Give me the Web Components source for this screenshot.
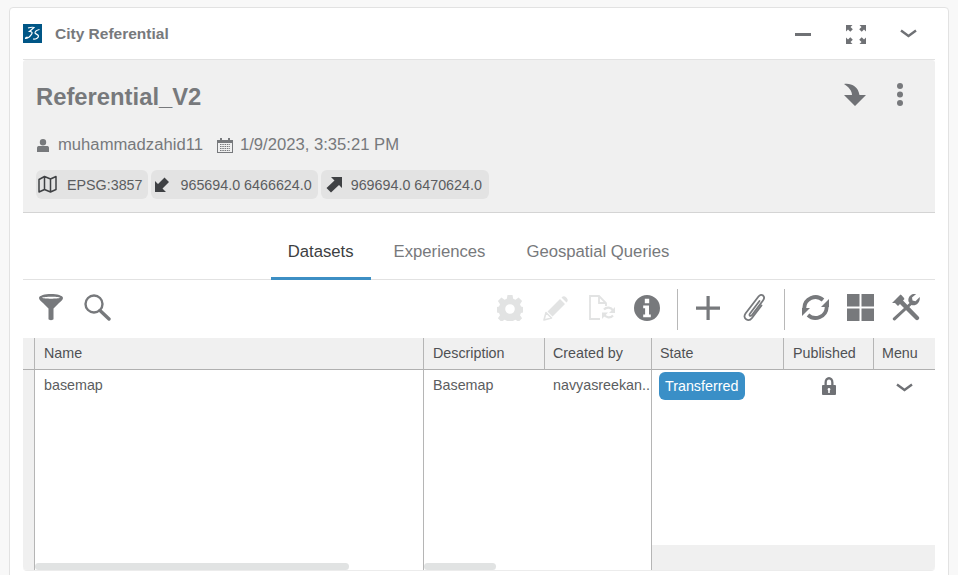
<!DOCTYPE html>
<html>
<head>
<meta charset="utf-8">
<style>
  html, body { margin: 0; height: 575px; overflow: hidden; background: #f8f8f8; }
  body { font-family: "Liberation Sans", Arial, sans-serif; color: #77797c; }
</style>
</head>
<body>
<city-widget>
  <widget-head slot="head" title-text="City Referential"></widget-head>
  <info-panel slot="panel" name="Referential_V2" user="muhammadzahid11" date="1/9/2023, 3:35:21 PM">
    <geo-chip icon="map" gap="10" pad="2" end="5">EPSG:3857</geo-chip>
    <geo-chip icon="sw" gap="12" pad="4" end="6">965694.0 6466624.0</geo-chip>
    <geo-chip icon="ne" gap="9" pad="5" end="7">969694.0 6470624.0</geo-chip>
  </info-panel>
  <tab-bar slot="tabs">
    <tab-item active>Datasets</tab-item>
    <tab-item>Experiences</tab-item>
    <tab-item>Geospatial Queries</tab-item>
  </tab-bar>
  <tool-bar slot="tools"></tool-bar>
  <data-grid slot="grid"></data-grid>
</city-widget>

<script>
const CORNER = "M0 0H6.500L4.500 2 6.800 4.300 4.300 6.800 2 4.500 0 6.500Z";

const ICONS = {
  minimize: '<rect x="0" y="0" width="16" height="3" fill="currentColor"/>',
  expand: `<g fill="currentColor"><path d="${CORNER}"/><path transform="matrix(-1 0 0 1 20 0)" d="${CORNER}"/><path transform="matrix(1 0 0 -1 0 19)" d="${CORNER}"/><path transform="matrix(-1 0 0 -1 20 19)" d="${CORNER}"/></g>`,
  chevron: '<path d="M1 1.500 8.500 7l7.500-5.500" fill="none" stroke="currentColor" stroke-width="2.400"/>',
  turn: '<path fill="currentColor" d="M0 1C7 0 14 3 15.500 12H22L11 23 0 12H8C8 8 5 4 0 1Z"/>',
  dots: '<g fill="currentColor"><circle cx="3" cy="3" r="3"/><circle cx="3" cy="11.500" r="3"/><circle cx="3" cy="20" r="3"/></g>',
  user: '<path fill="currentColor" d="M6 0a3.200 3.200 0 0 1 0 6.400A3.200 3.200 0 0 1 6 0ZM1.500 7h9C11.500 7 12 8 12 9v4H0V9c0-1 .5-2 1.500-2Z"/>',
  calendar: '<g fill="none" stroke="currentColor"><rect x=".5" y="2.500" width="15" height="12"/><path d="M3 6.500h10M3 8.500h10M3 10.500h10M3 12.500h10" stroke-dasharray="1.500 .8"/></g><path fill="currentColor" d="M0 2h16v3H0zM3 0h2v3H3zM11 0h2v3h-2z"/>',
  map: '<path fill="none" stroke="currentColor" stroke-width="1.500" stroke-linejoin="round" d="M1 4.500 6.500 1.500 12.500 4 18 1.500V14.500L12.500 17 6.500 14.500 1 17ZM6.500 1.500V14.500M12.500 4V17"/>',
  sw: '<path fill="currentColor" d="M0 15V4L3 7 9.500 .5 14 5 7.500 11.500 11 15Z"/>',
  ne: '<path fill="currentColor" d="M16 0V11L13 8 5 15.500 .5 11 8.500 3.500 5 0Z"/>',
  funnel: '<g fill="currentColor"><path fill-rule="evenodd" d="M0 4C0 1.500 6 0 12 0S24 1.500 24 4C24 6 22 7 20 9L14.500 14.500V25C14.500 26.500 9.500 26.500 9.500 25V14.500L4 9C2 7 0 6 0 4ZM3 3.800C5 5 19 5 21 3.800 19 2.500 5 2.500 3 3.800Z"/></g>',
  search: '<g fill="none" stroke="currentColor"><circle cx="10" cy="10" r="8.500" stroke-width="2.400"/><path d="M16 16.500 25 25" stroke-width="3.400" stroke-linecap="round"/></g>',
  gear: '<path fill="currentColor" fill-rule="evenodd" d="M10.500 0h5l.7 3.700 2.300 1 3.100-2.100 3.500 3.500-2.100 3.100 1 2.300 3.700.7v5l-3.700.7-1 2.300 2.100 3.100-3.500 3.500-3.100-2.100-2.300 1-.7 3.700h-5l-.7-3.700-2.300-1-3.100 2.100-3.500-3.500 2.100-3.100-1-2.300-3.700-.7v-5l3.700-.7 1-2.300-2.100-3.100 3.500-3.500 3.100 2.100 2.300-1ZM13 9.200a4.800 4.800 0 1 0 0 9.600 4.800 4.800 0 0 0 0-9.600Z"/>',
  pencil: '<path fill="none" stroke="currentColor" stroke-width="1.600" stroke-linejoin="round" d="M1 25 3 17.500 8.500 23Z"/><path fill="currentColor" d="M4.500 16.500 17 4 22 9 9.500 21.500ZM18.500 2.500C20 1 21.500 .8 23 2.300L23.700 3C25.200 4.500 25 6 23.500 7.500Z"/>',
  docsync: '<g fill="none" stroke="currentColor" stroke-width="1.800"><path d="M11 24H1V1H10L17 8V11M10 1V8H17"/></g><g fill="none" stroke="currentColor" stroke-width="2.200"><path d="M15 14.500A5.500 5.500 0 0 1 24 15.500"/><path d="M24 20.500A5.500 5.500 0 0 1 15 19.500"/></g><path fill="currentColor" d="M26 12V18H20ZM13 24V17.500H19Z"/>',
  info: '<path fill="currentColor" fill-rule="evenodd" d="M13 0a13 13 0 1 1 0 26 13 13 0 0 1 0-26ZM10.800 3.800v4.400h4.400V3.800ZM9.200 10.500v2.700h1.900v6.200H9.200v2.800h7.600v-2.800h-1.800v-8.900Z"/>',
  plus: '<path fill="currentColor" d="M10.500 0h3.200v10.500H24v3.200H13.700V24H10.500V13.700H0V10.500H10.500Z"/>',
  clip: '<path fill="none" stroke="currentColor" stroke-width="1.800" stroke-linecap="round" d="M17.500 8 8 20.500C6.500 22.500 8.500 24 10 22L21 7.500C24 3.500 19.500-.5 16.500 3.500L3.500 20.500C0 25.500 6.500 29.500 10 25L19.500 12.500"/>',
  refresh: '<g fill="none" stroke="currentColor" stroke-width="3.800"><path d="M2.300 14A11.200 11.200 0 0 1 21 6"/><path d="M24.700 13A11.200 11.200 0 0 1 6 21"/></g><path fill="currentColor" d="M27 5V13H19ZM0 22V14H8Z"/>',
  grid: '<path fill="currentColor" d="M0 0h12.500v12.500H0zM14.500 0H27v12.500H14.500zM0 14.500h12.500V27H0zM14.500 14.500H27V27H14.500z"/>',
  tools: '<g fill="currentColor"><path d="M0 9 8.500 .5C10 1.500 11.500 3 12.500 5L11 6.500 26.500 22.500C27.500 23.500 27.500 24.500 26.500 25.500 25.500 26.500 24.500 26.500 23.500 25.500L8 10 6 12 3 9Z"/><path d="M27.700 3 23.500 7.200 20.500 6.500 20 3.500 24.200 0C20-1 15.500 2.500 16.500 7.500L17.500 9 1 24C0 25.500 2 27.500 3.500 26L19.500 11C24 12.500 28.500 8.500 27.700 3Z"/></g>',
  lock: '<path fill="currentColor" fill-rule="evenodd" d="M1 8H2.500V5.500a4.500 5.500 0 0 1 9 0V8H13c.5 0 1 .5 1 1V17c0 .5-.5 1-1 1H1c-.5 0-1-.5-1-1V9c0-.5.5-1 1-1ZM4.800 8H9.200V5.500a2.200 3 0 0 0-4.400 0ZM7 11a1.300 1.300 0 0 0-.8 2.400V16h1.600V13.400A1.300 1.300 0 0 0 7 11Z"/>'
};

const VIEW = {
  minimize: [16, 3], expand: [20, 19], chevron: [17, 9], turn: [22, 23], dots: [6, 23],
  user: [12, 13], calendar: [16, 15], map: [19, 18.500], sw: [14, 15], ne: [16, 16],
  funnel: [24, 27], search: [27, 27], gear: [26, 26], pencil: [26, 26], docsync: [26, 26],
  info: [26, 26], plus: [24, 24], clip: [24, 29], refresh: [27, 27], grid: [27, 27],
  tools: [28, 27], lock: [14, 18]
};

class UiIcon extends HTMLElement {
  connectedCallback() {
    const name = this.getAttribute("name");
    const [w, h] = VIEW[name];
    this.attachShadow({ mode: "open" }).innerHTML = `
      <style>:host { display: inline-flex; flex: none; } svg { display: block; }</style>
      <svg width="${w}" height="${h}" viewBox="0 0 ${w} ${h}">${ICONS[name]}</svg>`;
  }
}

class CityWidget extends HTMLElement {
  constructor() {
    super();
    this.attachShadow({ mode: "open" }).innerHTML = `
      <style>
        :host {
          display: flex;
          flex-direction: column;
          box-sizing: border-box;
          margin: 7px 9px 0 9px;
          height: 580px;
          padding: 0 13px;
          background: #fff;
          border: 1px solid #e2e2e2;
          border-radius: 4px;
        }
      </style>
      <slot name="head"></slot>
      <slot name="panel"></slot>
      <slot name="tabs"></slot>
      <slot name="tools"></slot>
      <slot name="grid"></slot>`;
  }
}

class WidgetHead extends HTMLElement {
  connectedCallback() {
    this.attachShadow({ mode: "open" }).innerHTML = `
      <style>
        :host {
          display: flex;
          align-items: center;
          height: 51px;
          border-bottom: 1px solid #e2e2e2;
          color: #77797c;
        }
        .logo { width: 19px; height: 19px; margin-right: 13px; flex: none; display: block; }
        .title { font-size: 15.500px; font-weight: 700; flex: 1; }
        .acts { display: flex; align-items: center; color: #6f7175; padding-right: 18px; }
        .acts ui-icon:nth-child(1) { margin-right: 35px; margin-top: 2px; }
        .acts ui-icon:nth-child(2) { margin-right: 34px; margin-top: 2px; }
      </style>
      <svg class="logo" viewBox="0 0 19 19">
        <rect width="19" height="19" fill="#005686"/>
        <g fill="none" stroke="#fff" stroke-width="1.200">
          <path d="M5 4C7.500 3.200 9.500 3 11 3.500L6.500 7.500C9.500 7.500 9.800 9 8 11 6.800 12.800 4.800 14.500 2.500 14.500 2.500 13.500 3.500 13 4.500 13"/>
          <path d="M16.500 5.500C14 6 12 7.500 12 9 12.500 10 15 10.500 15.500 12 15.500 14 12.500 15.500 10 15"/>
        </g>
      </svg>
      <span class="title">${this.getAttribute("title-text")}</span>
      <div class="acts">
        <ui-icon name="minimize"></ui-icon>
        <ui-icon name="expand"></ui-icon>
        <ui-icon name="chevron"></ui-icon>
      </div>`;
  }
}

class InfoPanel extends HTMLElement {
  connectedCallback() {
    this.attachShadow({ mode: "open" }).innerHTML = `
      <style>
        :host {
          display: block;
          height: 153px;
          box-sizing: border-box;
          background: #f0f0f0;
          border-bottom: 1px solid #d4d4d4;
          border-radius: 3px 3px 0 0;
          padding: 23px 32px 0 13px;
        }
        .top { display: flex; align-items: center; height: 27px; }
        h1 { margin: 0; flex: 1; font-size: 23.800px; line-height: 27px; font-weight: 700; color: #77797c; }
        .top ui-icon { margin-top: -5px; }
        .top ui-icon:nth-of-type(1) { color: #6f7175; margin-right: 31px; }
        .top ui-icon:nth-of-type(2) { color: #77797c; }
        .meta { display: flex; align-items: center; margin-top: 25px; height: 20px; font-size: 16.650px; color: #77797c; }
        .meta .name { margin: 0 14px 0 9px; }
        .meta .when { margin-left: 7px; }
        .meta ui-icon:first-child { margin-left: 1px; }
        .chips { display: flex; gap: 3px; margin-top: 15px; }
      </style>
      <div class="top">
        <h1>${this.getAttribute("name")}</h1>
        <ui-icon name="turn"></ui-icon>
        <ui-icon name="dots"></ui-icon>
      </div>
      <div class="meta">
        <ui-icon name="user"></ui-icon><span class="name">${this.getAttribute("user")}</span>
        <ui-icon name="calendar"></ui-icon><span class="when">${this.getAttribute("date")}</span>
      </div>
      <div class="chips"><slot></slot></div>`;
  }
}

class GeoChip extends HTMLElement {
  connectedCallback() {
    const gap = this.getAttribute("gap");
    const pad = this.getAttribute("pad");
    const end = this.getAttribute("end");
    this.attachShadow({ mode: "open" }).innerHTML = `
      <style>
        :host {
          display: inline-flex;
          align-items: center;
          height: 29px;
          box-sizing: border-box;
          padding: 0 ${end}px 0 ${pad}px;
          background: #e3e3e3;
          border-radius: 6px;
          font-size: 14.300px;
          color: #5b5d60;
        }
        ui-icon { margin-right: ${gap}px; color: #3f4144; }
      </style>
      <ui-icon name="${this.getAttribute("icon")}"></ui-icon><slot></slot>`;
  }
}

class TabBar extends HTMLElement {
  constructor() {
    super();
    this.attachShadow({ mode: "open" }).innerHTML = `
      <style>
        :host {
          display: flex;
          justify-content: center;
          height: 67px;
          box-sizing: border-box;
          border-bottom: 1px solid #e2e2e2;
        }
      </style>
      <slot></slot>`;
  }
}

class TabItem extends HTMLElement {
  constructor() {
    super();
    this.attachShadow({ mode: "open" }).innerHTML = `
      <style>
        :host {
          display: flex;
          align-items: center;
          box-sizing: border-box;
          height: 67px;
          padding: 16px 18px 5px 23px;
          font-size: 16.700px;
          color: #77797c;
        }
        :host([active]) {
          padding: 16px 17px 2px 17px;
          color: #3d3f42;
          border-bottom: 3px solid #3d8fc4;
        }
      </style>
      <slot></slot>`;
  }
}

class ToolBar extends HTMLElement {
  connectedCallback() {
    this.attachShadow({ mode: "open" }).innerHTML = `
      <style>
        :host {
          display: flex;
          align-items: center;
          box-sizing: border-box;
          height: 58px;
          padding: 0 15px 3px 16px;
          color: #77797c;
          flex: none;
        }
        .left { display: flex; gap: 21px; align-items: center; flex: 1; }
        .group { display: flex; align-items: center; gap: 20px; }
        .off { color: #e2e3e3; }
        .sep { width: 1px; height: 41px; background: #b8b8b8; margin-top: 4px; }
      </style>
      <div class="left">
        <ui-icon name="funnel"></ui-icon>
        <ui-icon name="search"></ui-icon>
      </div>
      <div class="group">
        <ui-icon class="off" name="gear"></ui-icon>
        <ui-icon class="off" name="pencil"></ui-icon>
        <ui-icon class="off" name="docsync"></ui-icon>
      </div>
      <ui-icon name="info" style="margin-left:19px"></ui-icon>
      <div class="sep" style="margin-left:17px;margin-right:18px"></div>
      <ui-icon name="plus" style="margin-right:1px"></ui-icon>
      <ui-icon name="clip" style="margin:0 18px 0 21px"></ui-icon>
      <div class="sep" style="margin-right:17px"></div>
      <ui-icon name="refresh"></ui-icon>
      <ui-icon name="grid" style="margin:0 18px"></ui-icon>
      <ui-icon name="tools"></ui-icon>`;
  }
}

class DataGrid extends HTMLElement {
  connectedCallback() {
    this.attachShadow({ mode: "open" }).innerHTML = `
      <style>
        :host {
          display: grid;
          grid-template-columns: 12px 389px 121px 107px 132px 90px 1fr;
          grid-template-rows: 32px 200px;
          font-size: 14.300px;
          color: #5b5d60;
          border-bottom: 1px solid #ececec;
          border-radius: 0 0 4px 4px;
          align-self: stretch;
        }
        .gutter { background: #f0f0f0; border-right: 1px solid #b5b5b5; }
        .h {
          background: #f0f0f0;
          border-bottom: 1px solid #b0b0b0;
          border-right: 1px solid #b5b5b5;
          padding: 7px 0 0 9px;
          color: #4f5154;
          white-space: nowrap;
        }
        .h.last { border-right: 0; }
        .h.tight { padding-left: 8px; }
        .gutter.h { padding: 0; }
        .gutter.end { border-radius: 0 0 0 4px; }
        .c { padding: 7px 0 0 9px; white-space: nowrap; display: flex; flex-direction: column; min-width: 0; }
        .c.line { border-right: 1px solid #b5b5b5; }
        .clip { overflow: hidden; margin-left: -1px; }
        .thumb { margin-top: auto; margin-left: -9px; height: 7px; background: #e1e3e3; border-radius: 4px; }
        .right {
          grid-column: 5 / 8;
          display: grid;
          grid-template-columns: 132px 90px 1fr;
          grid-template-rows: 1fr 25px;
        }
        .cell { padding-top: 2px; }
        .foot { grid-column: 1 / 4; background: #f0f0f0; border-radius: 0 0 4px 0; }
        .badge {
          display: inline-block;
          margin-left: 7px;
          background: #3a8fc7;
          color: #fff;
          line-height: 28px;
          height: 28px;
          padding: 0 7px 0 6px;
          border-radius: 6px;
        }
        .mid { display: flex; justify-content: center; padding-top: 7px; color: #6f7175; }
      </style>
      <div class="gutter h"></div>
      <div class="h">Name</div>
      <div class="h">Description</div>
      <div class="h tight">Created by</div>
      <div class="h tight">State</div>
      <div class="h">Published</div>
      <div class="h last tight">Menu</div>
      <div class="gutter end"></div>
      <div class="c line"><span>basemap</span><div class="thumb" style="width:314px"></div></div>
      <div class="c"><span>Basemap</span><div class="thumb" style="width:72px"></div></div>
      <div class="c line"><span class="clip">navyasreekan..</span></div>
      <div class="right">
        <div class="cell"><span class="badge">Transferred</span></div>
        <div class="cell mid"><ui-icon name="lock"></ui-icon></div>
        <div class="cell mid" style="padding-top:13px"><ui-icon name="chevron"></ui-icon></div>
        <div class="foot"></div>
      </div>`;
  }
}

customElements.define("ui-icon", UiIcon);
customElements.define("city-widget", CityWidget);
customElements.define("widget-head", WidgetHead);
customElements.define("info-panel", InfoPanel);
customElements.define("geo-chip", GeoChip);
customElements.define("tab-bar", TabBar);
customElements.define("tab-item", TabItem);
customElements.define("tool-bar", ToolBar);
customElements.define("data-grid", DataGrid);
</script>
</body>
</html>
